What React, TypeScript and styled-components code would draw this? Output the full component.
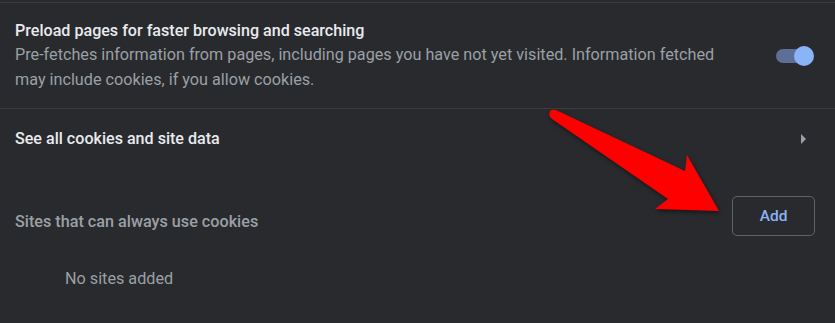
import React from "react";
import styled, { createGlobalStyle } from "styled-components";

const Global = createGlobalStyle`
  html, body { margin: 0; padding: 0; background: #292a2d; }
  body { font-family: Roboto, "Noto Sans", "Liberation Sans", sans-serif; }
`;

const Page = styled.div`
  position: relative;
  width: 835px;
  height: 323px;
  overflow: hidden;
  background: #292a2d;
  padding-top: 2px;
  box-sizing: border-box;
`;

const Row = styled.div<{ $pad?: string; $border?: boolean }>`
  display: flex;
  align-items: center;
  padding: ${(p) => p.$pad || "0"};
  border-top: ${(p) => (p.$border ? "1px solid #3c3d41" : "none")};
`;

const TextBlock = styled.div`
  flex: 1;
  min-width: 0;
`;

const Title = styled.div`
  font-size: 16.1px;
  font-weight: 500;
  line-height: 24px;
  color: #e8eaed;
`;

const Desc = styled.div`
  font-size: 16.2px;
  font-weight: 400;
  line-height: 24.5px;
  color: #9aa0a6;
  white-space: nowrap;
`;

const Toggle = styled.div`
  position: relative;
  width: 36px;
  height: 14px;
  border-radius: 7px;
  background: #5e6f97;
  margin-right: 23px;
  flex: none;
`;

const Knob = styled.div`
  position: absolute;
  right: -2px;
  top: -3px;
  width: 20px;
  height: 20px;
  border-radius: 50%;
  background: #8ab4f8;
`;

const Chevron = styled.div`
  width: 0;
  height: 0;
  border-top: 5px solid transparent;
  border-bottom: 5px solid transparent;
  border-left: 5px solid #9aa0a6;
  margin-right: 29px;
  flex: none;
`;

const SubHeader = styled.div`
  flex: 1;
  font-size: 16.2px;
  font-weight: 500;
  line-height: 24px;
  color: #9aa0a6;
  margin-top: 11px;
`;

const AddButton = styled.button`
  width: 83px;
  height: 40px;
  box-sizing: border-box;
  border: 1px solid #5f6368;
  border-radius: 5px;
  background: transparent;
  color: #8ab4f8;
  font-family: Roboto, "Noto Sans", sans-serif;
  font-size: 15.5px;
  font-weight: 500;
  margin-right: 20px;
  padding: 0;
`;

const Empty = styled.div`
  font-size: 16.2px;
  line-height: 24px;
  color: #9aa0a6;
  padding-left: 65px;
  margin-top: 31px;
`;

const ArrowSvg = styled.svg`
  position: absolute;
  left: 0;
  top: 0;
  filter: drop-shadow(1px 2px 2px rgba(0, 0, 0, 0.5));
  pointer-events: none;
`;

export default function App() {
  return (
    <>
      <Global />
      <Page>
        <Row $border $pad="16px 0 16px 15px">
          <TextBlock>
            <Title>Preload pages for faster browsing and searching</Title>
            <Desc>
              Pre-fetches information from pages, including pages you have not yet visited. Information fetched
              <br />
              may include cookies, if you allow cookies.
            </Desc>
          </TextBlock>
          <Toggle>
            <Knob />
          </Toggle>
        </Row>
        <Row $border $pad="18px 0 18px 15px">
          <TextBlock>
            <Title>See all cookies and site data</Title>
          </TextBlock>
          <Chevron />
        </Row>
        <Row $pad="27px 0 0 15px">
          <SubHeader>Sites that can always use cookies</SubHeader>
          <AddButton>Add</AddButton>
        </Row>
        <Empty>No sites added</Empty>
        <ArrowSvg width="835" height="323" viewBox="0 0 835 323">
          <path
            d="M551 110 Q555 109 558 111 L685 171 L687 155 L719 211 L655 209 L668 199 L552 119 Q547 115 551 110 Z"
            fill="#ff0000"
          />
        </ArrowSvg>
      </Page>
    </>
  );
}
